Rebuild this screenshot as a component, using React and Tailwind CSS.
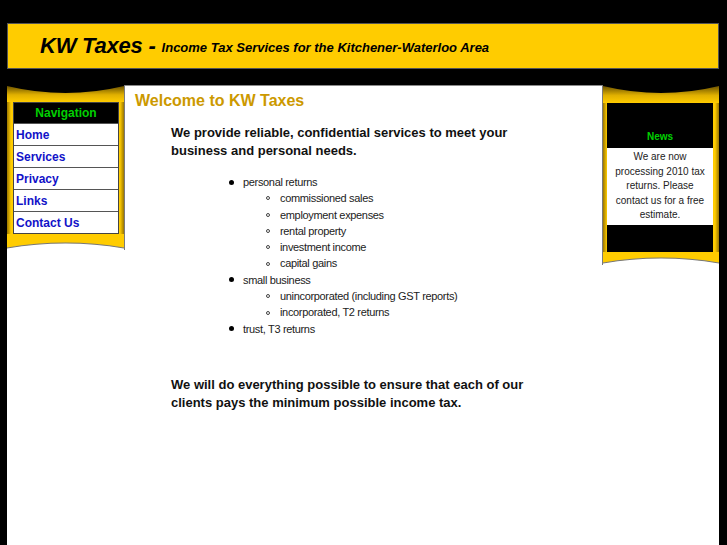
const sans = "font-['Liberation_Sans',Arial,sans-serif]";

const TopCap = ({ w, h = 18 }) => (
  <svg width={w} height={h} viewBox={`0 0 ${w} ${h}`} className="block">
    <defs>
      <linearGradient id={`tg${w}`} x1="0" y1="0" x2="0" y2="1">
        <stop offset="0" stopColor="#6b5200" />
        <stop offset="0.55" stopColor="#e0b000" />
        <stop offset="1" stopColor="#ffcc00" />
      </linearGradient>
    </defs>
    <rect width={w} height={h} fill="#000" />
    <path d={`M0 1 Q${w / 2} 15 ${w} 1 L${w} ${h} L0 ${h} Z`} fill={`url(#tg${w})`} />
  </svg>
);

const BottomCap = ({ w, h }) => (
  <svg width={w} height={h} viewBox={`0 0 ${w} ${h}`} className="block">
    <rect width={w} height={h} fill="#fff" />
    <path d={`M0 0 L${w} 0 L${w} ${h - 2} Q${w / 2} ${h - 12} 0 ${h - 2} Z`} fill="#ffcc00" />
    <path d={`M0 ${h - 2} Q${w / 2} ${h - 12} ${w} ${h - 2}`} fill="none" stroke="#777" strokeWidth="1.2" />
  </svg>
);

const gold =
  "bg-[linear-gradient(to_right,#9a7600_0px,#ffcc00_4px,#ffcc00_calc(100%-4px),#9a7600_100%)]";

const navItems = ['Home', 'Services', 'Privacy', 'Links', 'Contact Us'];

function LeftPanel() {
  return (
    <div className="w-[118px] shrink-0 flex flex-col border-r border-[#7a7a7a]">
      <TopCap w={117} h={17} />
      <div className={`${gold} pl-[6px] pr-[5px]`}>
        <div className="border border-[#444] bg-white">
          <div className="h-[20px] bg-black flex items-center justify-center text-[12px] font-bold text-[#00d000]">
            Navigation
          </div>
          {navItems.map((n) => (
            <div
              key={n}
              className="h-[22px] border-t border-[#555] flex items-center pl-[2px] text-[12px] font-bold text-[#1212c8]"
            >
              {n}
            </div>
          ))}
        </div>
      </div>
      <BottomCap w={117} h={16} />
    </div>
  );
}

function RightPanel() {
  return (
    <div className="w-[117px] shrink-0 flex flex-col border-l border-[#7a7a7a]">
      <TopCap w={116} />
      <div className={`${gold} pl-[4px] pr-[6px]`}>
        <div className="bg-black h-[149px] flex flex-col">
          <div className="h-[45px] flex items-end justify-center pb-[4px] text-[10px] font-bold text-[#00d000]">
            News
          </div>
          <div className="bg-white text-center text-[10px] leading-[14.5px] text-[#222] px-[2px] py-[2px]">
            We are now processing 2010 tax returns. Please contact us for a free estimate.
          </div>
        </div>
      </div>
      <BottomCap w={116} h={13} />
    </div>
  );
}

const Disc = ({ children }) => (
  <div className="flex items-center h-[16.3px]">
    <span className="w-[5px] h-[5px] rounded-full bg-black ml-[-14px] mr-[9px]" />
    {children}
  </div>
);

const Circle = ({ children }) => (
  <div className="flex items-center h-[16.3px] pl-[37px]">
    <span className="w-[4px] h-[4px] rounded-full border border-[#444] ml-[-14px] mr-[10px]" />
    {children}
  </div>
);

export default function App() {
  return (
    <div className={`min-h-screen bg-black flex flex-col pt-[23px] ${sans}`}>
      <div className="ml-[7px] w-[712px] h-[46px] bg-[#ffcc00] border border-[#555] flex items-center pl-[32px] italic font-bold text-black">
        <span className="text-[22px] tracking-[-0.01em] mt-[-2px]">KW Taxes -</span>
        <span className="text-[13px] ml-[6px] mt-[3px]">Income Tax Services for the Kitchener-Waterloo Area</span>
      </div>
      <div className="ml-[7px] w-[712px] mt-[16px] flex-1 bg-white flex items-start">
        <LeftPanel />
        <div className="w-[477px] shrink-0 self-stretch border-t border-[#8a8a8a] pt-[5px] pl-[10px]">
          <h1 className="text-[16px] font-bold text-[#cc9900] leading-[19px]">Welcome to KW Taxes</h1>
          <p className="ml-[36px] mt-[14px] w-[380px] text-[13px] font-bold leading-[18px] text-[#111]">
            We provide reliable, confidential services to meet your business and personal needs.
          </p>
          <div className="ml-[108px] mt-[14px] text-[11px] text-[#222] tracking-[-0.03em]">
            <Disc>personal returns</Disc>
            <Circle>commissioned sales</Circle>
            <Circle>employment expenses</Circle>
            <Circle>rental property</Circle>
            <Circle>investment income</Circle>
            <Circle>capital gains</Circle>
            <Disc>small business</Disc>
            <Circle>unincorporated (including GST reports)</Circle>
            <Circle>incorporated, T2 returns</Circle>
            <Disc>trust, T3 returns</Disc>
          </div>
          <p className="ml-[36px] mt-[39px] w-[380px] text-[13px] font-bold leading-[18px] text-[#111]">
            We will do everything possible to ensure that each of our clients pays the minimum possible income tax.
          </p>
        </div>
        <RightPanel />
      </div>
    </div>
  );
}
